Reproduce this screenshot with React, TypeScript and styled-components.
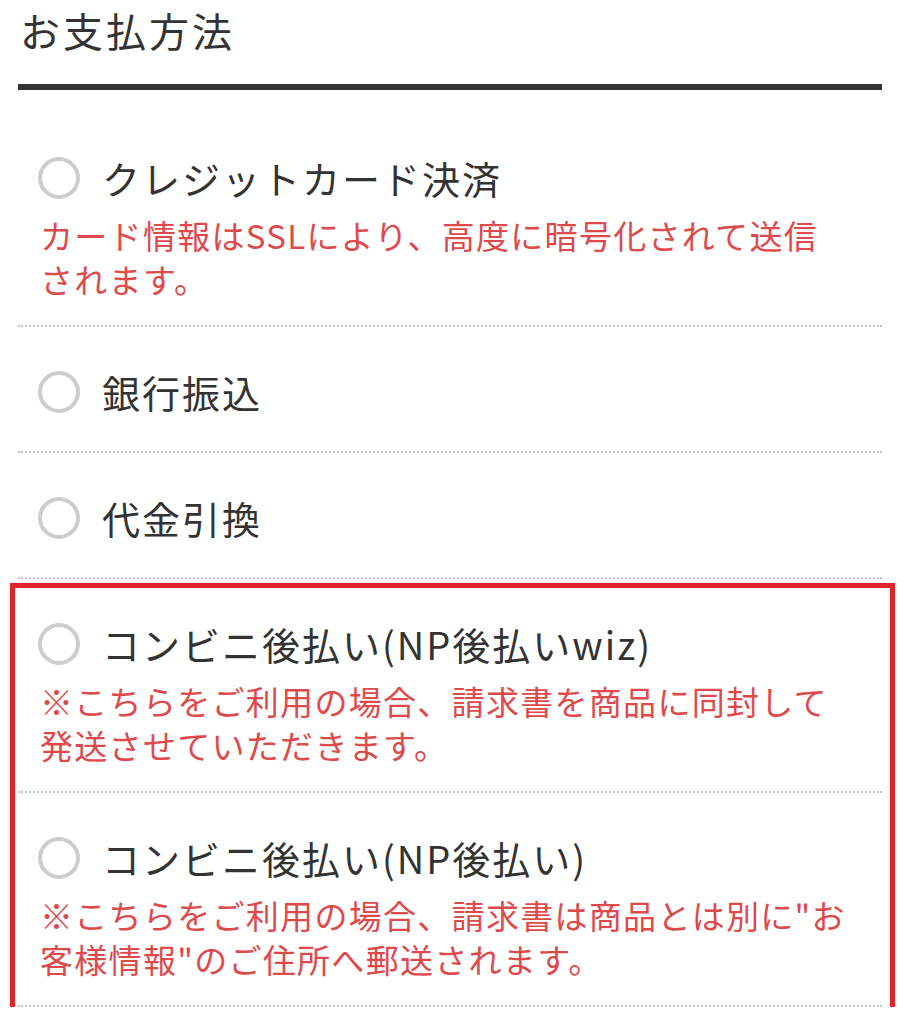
import React from "react";
import styled, { createGlobalStyle } from "styled-components";

const GlobalStyle = createGlobalStyle`
  html, body {
    margin: 0;
    padding: 0;
    background: #ffffff;
  }
  body {
    font-family: "Noto Sans CJK JP", "Noto Sans", sans-serif;
    color: #333333;
  }
`;

const Page = styled.main`
  padding: 2px 18px 0 18px;
  width: 900px;
  box-sizing: border-box;
`;

const Title = styled.h2`
  margin: 0;
  font-size: 40px;
  font-weight: 400;
  letter-spacing: 3px;
  line-height: 56px;
  color: #333333;
  padding-left: 2px;
`;

const TitleRule = styled.div`
  margin-top: 26px;
  height: 6px;
  background: #333333;
`;

const List = styled.div`
  padding-top: 23px;
  display: flex;
  flex-direction: column;
`;

const Row = styled.label`
  display: block;
  padding: 40px 0 24px 0;
  border-bottom: 2px dotted #c4c4c4;
  cursor: pointer;
`;

const Head = styled.div`
  display: flex;
  align-items: center;
  gap: 22px;
  padding-left: 20px;
  height: 50px;
  margin-bottom: 10px;
`;

const Radio = styled.span`
  width: 42px;
  height: 42px;
  box-sizing: border-box;
  border-radius: 50%;
  border: 4px solid #cdcdcd;
  flex: none;
`;

const Label = styled.span`
  font-size: 38px;
  letter-spacing: 2px;
  line-height: 50px;
  color: #333333;
  white-space: nowrap;
`;

const Note = styled.p`
  margin: 0;
  padding-left: 22px;
  font-size: 33px;
  letter-spacing: 1.3px;
  line-height: 44px;
  color: #de4a4c;
`;

const Highlight = styled.div`
  position: relative;
`;

const Frame = styled.div`
  position: absolute;
  top: 4px;
  bottom: -7px;
  left: -8px;
  right: -13px;
  border: 5px solid #e0242b;
  pointer-events: none;
`;

type Method = { label: string; note?: React.ReactNode };

const Option: React.FC<Method> = ({ label, note }) => (
  <Row>
    <Head>
      <Radio />
      <Label>{label}</Label>
    </Head>
    {note && <Note>{note}</Note>}
  </Row>
);

export default function App() {
  return (
    <>
      <GlobalStyle />
      <Page>
        <Title>お支払方法</Title>
        <TitleRule />
        <List>
          <Option
            label="クレジットカード決済"
            note={
              <>
                カード情報はSSLにより、高度に暗号化されて送信
                <br />
                されます。
              </>
            }
          />
          <Option label="銀行振込" />
          <Option label="代金引換" />
          <Highlight>
            <Option
              label="コンビニ後払い(NP後払いwiz)"
              note={
                <>
                  ※こちらをご利用の場合、請求書を商品に同封して
                  <br />
                  発送させていただきます。
                </>
              }
            />
            <Option
              label="コンビニ後払い(NP後払い)"
              note={
                <>
                  ※こちらをご利用の場合、請求書は商品とは別に"お
                  <br />
                  客様情報"のご住所へ郵送されます。
                </>
              }
            />
            <Frame />
          </Highlight>
        </List>
      </Page>
    </>
  );
}
